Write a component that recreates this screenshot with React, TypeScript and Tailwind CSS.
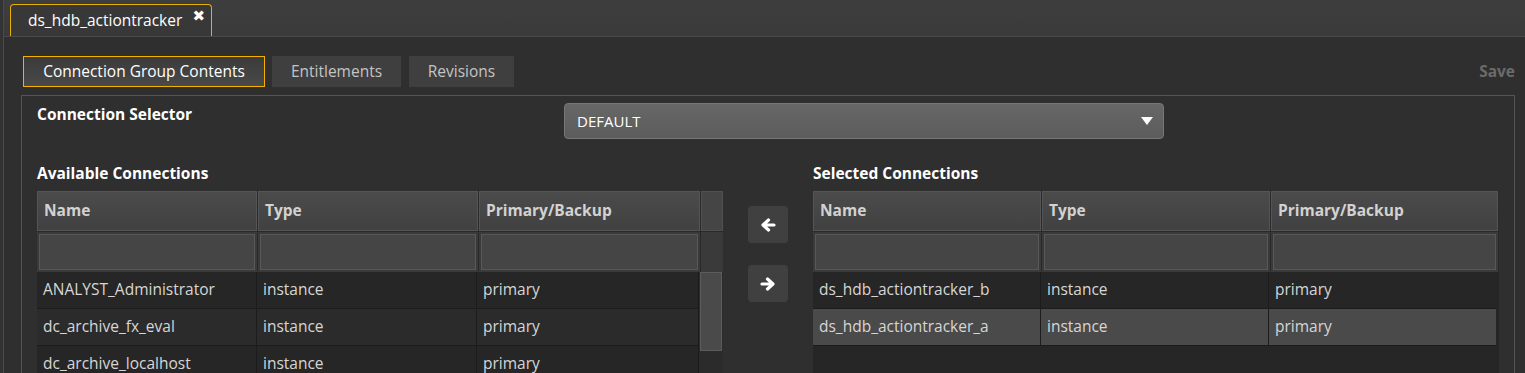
import React from "react";

const font = { fontFamily: '"Open Sans", "Noto Sans", Arial, sans-serif' };

const leftRows = [
  ["ANALYST_Administrator", "instance", "primary"],
  ["dc_archive_fx_eval", "instance", "primary"],
  ["dc_archive_localhost", "instance", "primary"],
];
const rightRows = [
  ["ds_hdb_actiontracker_b", "instance", "primary"],
  ["ds_hdb_actiontracker_a", "instance", "primary"],
];

function Arrow({ dir }: { dir: "left" | "right" }) {
  return (
    <svg width="16" height="16" viewBox="0 0 16 16" className={dir === "right" ? "rotate-180" : ""}>
      <path d="M14 8H3.5M8.5 3L3 8l5.5 5" fill="none" stroke="#ffffff" strokeWidth="3.2" strokeLinecap="round" strokeLinejoin="round" />
    </svg>
  );
}

function HeaderCell({ label, w }: { label: string; w: string }) {
  return (
    <div className={`${w} h-full shrink-0 border border-[#555555] bg-gradient-to-b from-[#4b4b4b] to-[#414141] flex items-center pl-[6px] text-[15.5px] font-bold text-[#d2d2d2]`}>
      {label}
    </div>
  );
}

function FilterCell({ w }: { w: string }) {
  return (
    <div className={`${w} h-full shrink-0 p-[2px] bg-[#3a3a3a]`}>
      <div className="w-full h-full border border-[#585858] bg-[#454545]" />
    </div>
  );
}

function Table({
  rows,
  scroll,
  selectedIndex,
}: {
  rows: string[][];
  scroll: boolean;
  selectedIndex?: number;
}) {
  const w1 = scroll ? "w-[220px]" : "w-[228px]";
  const w2 = scroll ? "w-[220px]" : "w-[228px]";
  const w3 = scroll ? "w-[221px]" : "w-[227px]";
  return (
    <div className="w-[686px] shrink-0 flex flex-col bg-[#262626]">
      <div className="h-[41px] shrink-0 flex gap-[1px] bg-[#2a2a2a] border-b border-[#2a2a2a]">
        <HeaderCell label="Name" w={w1} />
        <HeaderCell label="Type" w={w2} />
        <HeaderCell label="Primary/Backup" w={w3} />
        {scroll && <div className="flex-1 h-full bg-[#454545] border border-[#505050]" />}
      </div>
      <div className="h-[40px] shrink-0 flex gap-[1px] bg-[#2a2a2a]">
        <FilterCell w={w1} />
        <FilterCell w={w2} />
        <FilterCell w={w3} />
        {scroll && <div className="flex-1 h-full bg-[#3a3a3a]" />}
      </div>
      <div className="flex shrink-0">
        <div className="flex flex-col">
          {rows.map((r, i) => (
            <div
              key={i}
              className={`h-[37px] shrink-0 flex border-b border-[#1c1c1c] ${
                i === selectedIndex ? "bg-[#4a4a4a]" : i % 2 === 0 ? "bg-[#262626]" : "bg-[#2b2b2b]"
              }`}
            >
              <div className={`${w1} shrink-0 flex items-center pl-[6px] text-[15.5px] text-[#d6d6d6] border-r border-[#1c1c1c]`}>{r[0]}</div>
              <div className={`${w2} shrink-0 flex items-center pl-[6px] text-[15.5px] text-[#d6d6d6] border-r border-[#1c1c1c]`}>{r[1]}</div>
              <div className={`${w3} shrink-0 flex items-center pl-[6px] text-[15.5px] text-[#d6d6d6]`}>{r[2]}</div>
            </div>
          ))}
          <div className="h-[40px]" />
        </div>
        {scroll && (
          <div className="flex-1 bg-[#2b2b2b] border-l border-[#1c1c1c]">
            <div className="h-[79px] mx-[1px] bg-[#4a4a4a] border border-[#5c5c5c]" />
          </div>
        )}
      </div>
    </div>
  );
}

export default function App() {
  return (
    <div style={font} className="w-[1525px] h-[373px] overflow-hidden bg-[#2f2f2f] flex">
      <div className="w-[4px] h-full shrink-0 bg-[#333333] border-r border-[#4a4a4a]" />
      <div className="flex-1 flex flex-col">
        {/* top bar */}
        <div className="h-[37px] shrink-0 bg-gradient-to-b from-[#3e3e3e] to-[#3a3a3a] border-b border-[#4a4a4a] flex items-end pl-[6px]">
          <div className="h-[32px] w-[202px] rounded-t-[4px] border border-b-0 border-[#e8b000] bg-[#383838] flex items-center pl-[17px] pr-[6px]">
            <span className="text-[15.5px] text-white">ds_hdb_actiontracker</span>
            <span className="ml-auto mb-[8px] text-[15px] text-white font-bold leading-none" style={{ fontFamily: '"DejaVu Sans", sans-serif' }}>
              ✖
            </span>
          </div>
        </div>

        {/* subtabs */}
        <div className="mt-[19px] h-[31px] shrink-0 flex items-center pl-[19px] pr-[10px]">
          <div className="h-[31px] w-[242px] border border-[#f0b400] bg-gradient-to-b from-[#3a3a3a] to-[#4a4a4a] flex items-center justify-center text-[15.5px] text-white">
            Connection Group Contents
          </div>
          <div className="ml-[7px] h-[31px] w-[129px] bg-[#3f3f3f] flex items-center justify-center text-[15.5px] text-[#c4c4c4]">
            Entitlements
          </div>
          <div className="ml-[8px] h-[31px] w-[105px] bg-[#3f3f3f] flex items-center justify-center text-[15.5px] text-[#c4c4c4]">
            Revisions
          </div>
          <div className="ml-auto text-[15.5px] font-bold text-[#6b6b6b] pt-[1px]">Save</div>
        </div>

        {/* panel */}
        <div className="mt-[8px] ml-[17px] mr-[10px] flex-1 border border-b-0 border-[#555555] px-[15px] pt-[7px] flex flex-col">
          <div className="flex h-[36px] shrink-0">
            <div className="w-[527px] text-[15.5px] font-bold text-white leading-[22px]">Connection Selector</div>
            <div className="w-[600px] h-[36px] rounded-[4px] border border-[#777777] bg-gradient-to-b from-[#676767] to-[#5c5c5c] flex items-center pl-[12px] pr-[10px]">
              <span className="text-[15px] text-white">DEFAULT</span>
              <svg className="ml-auto" width="12" height="9" viewBox="0 0 12 9">
                <polygon points="0,0 12,0 6,8" fill="#ffffff" />
              </svg>
            </div>
          </div>

          <div className="mt-[23px] flex shrink-0">
            <div className="flex flex-col">
              <div className="h-[29px] text-[15.5px] font-bold text-white leading-[22px]">Available Connections</div>
              <Table rows={leftRows} scroll />
            </div>
            <div className="w-[90px] shrink-0 flex flex-col items-center pt-[44px]">
              <div className="w-[40px] h-[37px] rounded-[4px] bg-[#404040] flex items-center justify-center">
                <Arrow dir="left" />
              </div>
              <div className="mt-[22px] w-[40px] h-[37px] rounded-[4px] bg-[#404040] flex items-center justify-center">
                <Arrow dir="right" />
              </div>
            </div>
            <div className="flex flex-col">
              <div className="h-[29px] text-[15.5px] font-bold text-white leading-[22px]">Selected Connections</div>
              <Table rows={rightRows} scroll={false} selectedIndex={1} />
            </div>
          </div>
        </div>
      </div>
    </div>
  );
}
